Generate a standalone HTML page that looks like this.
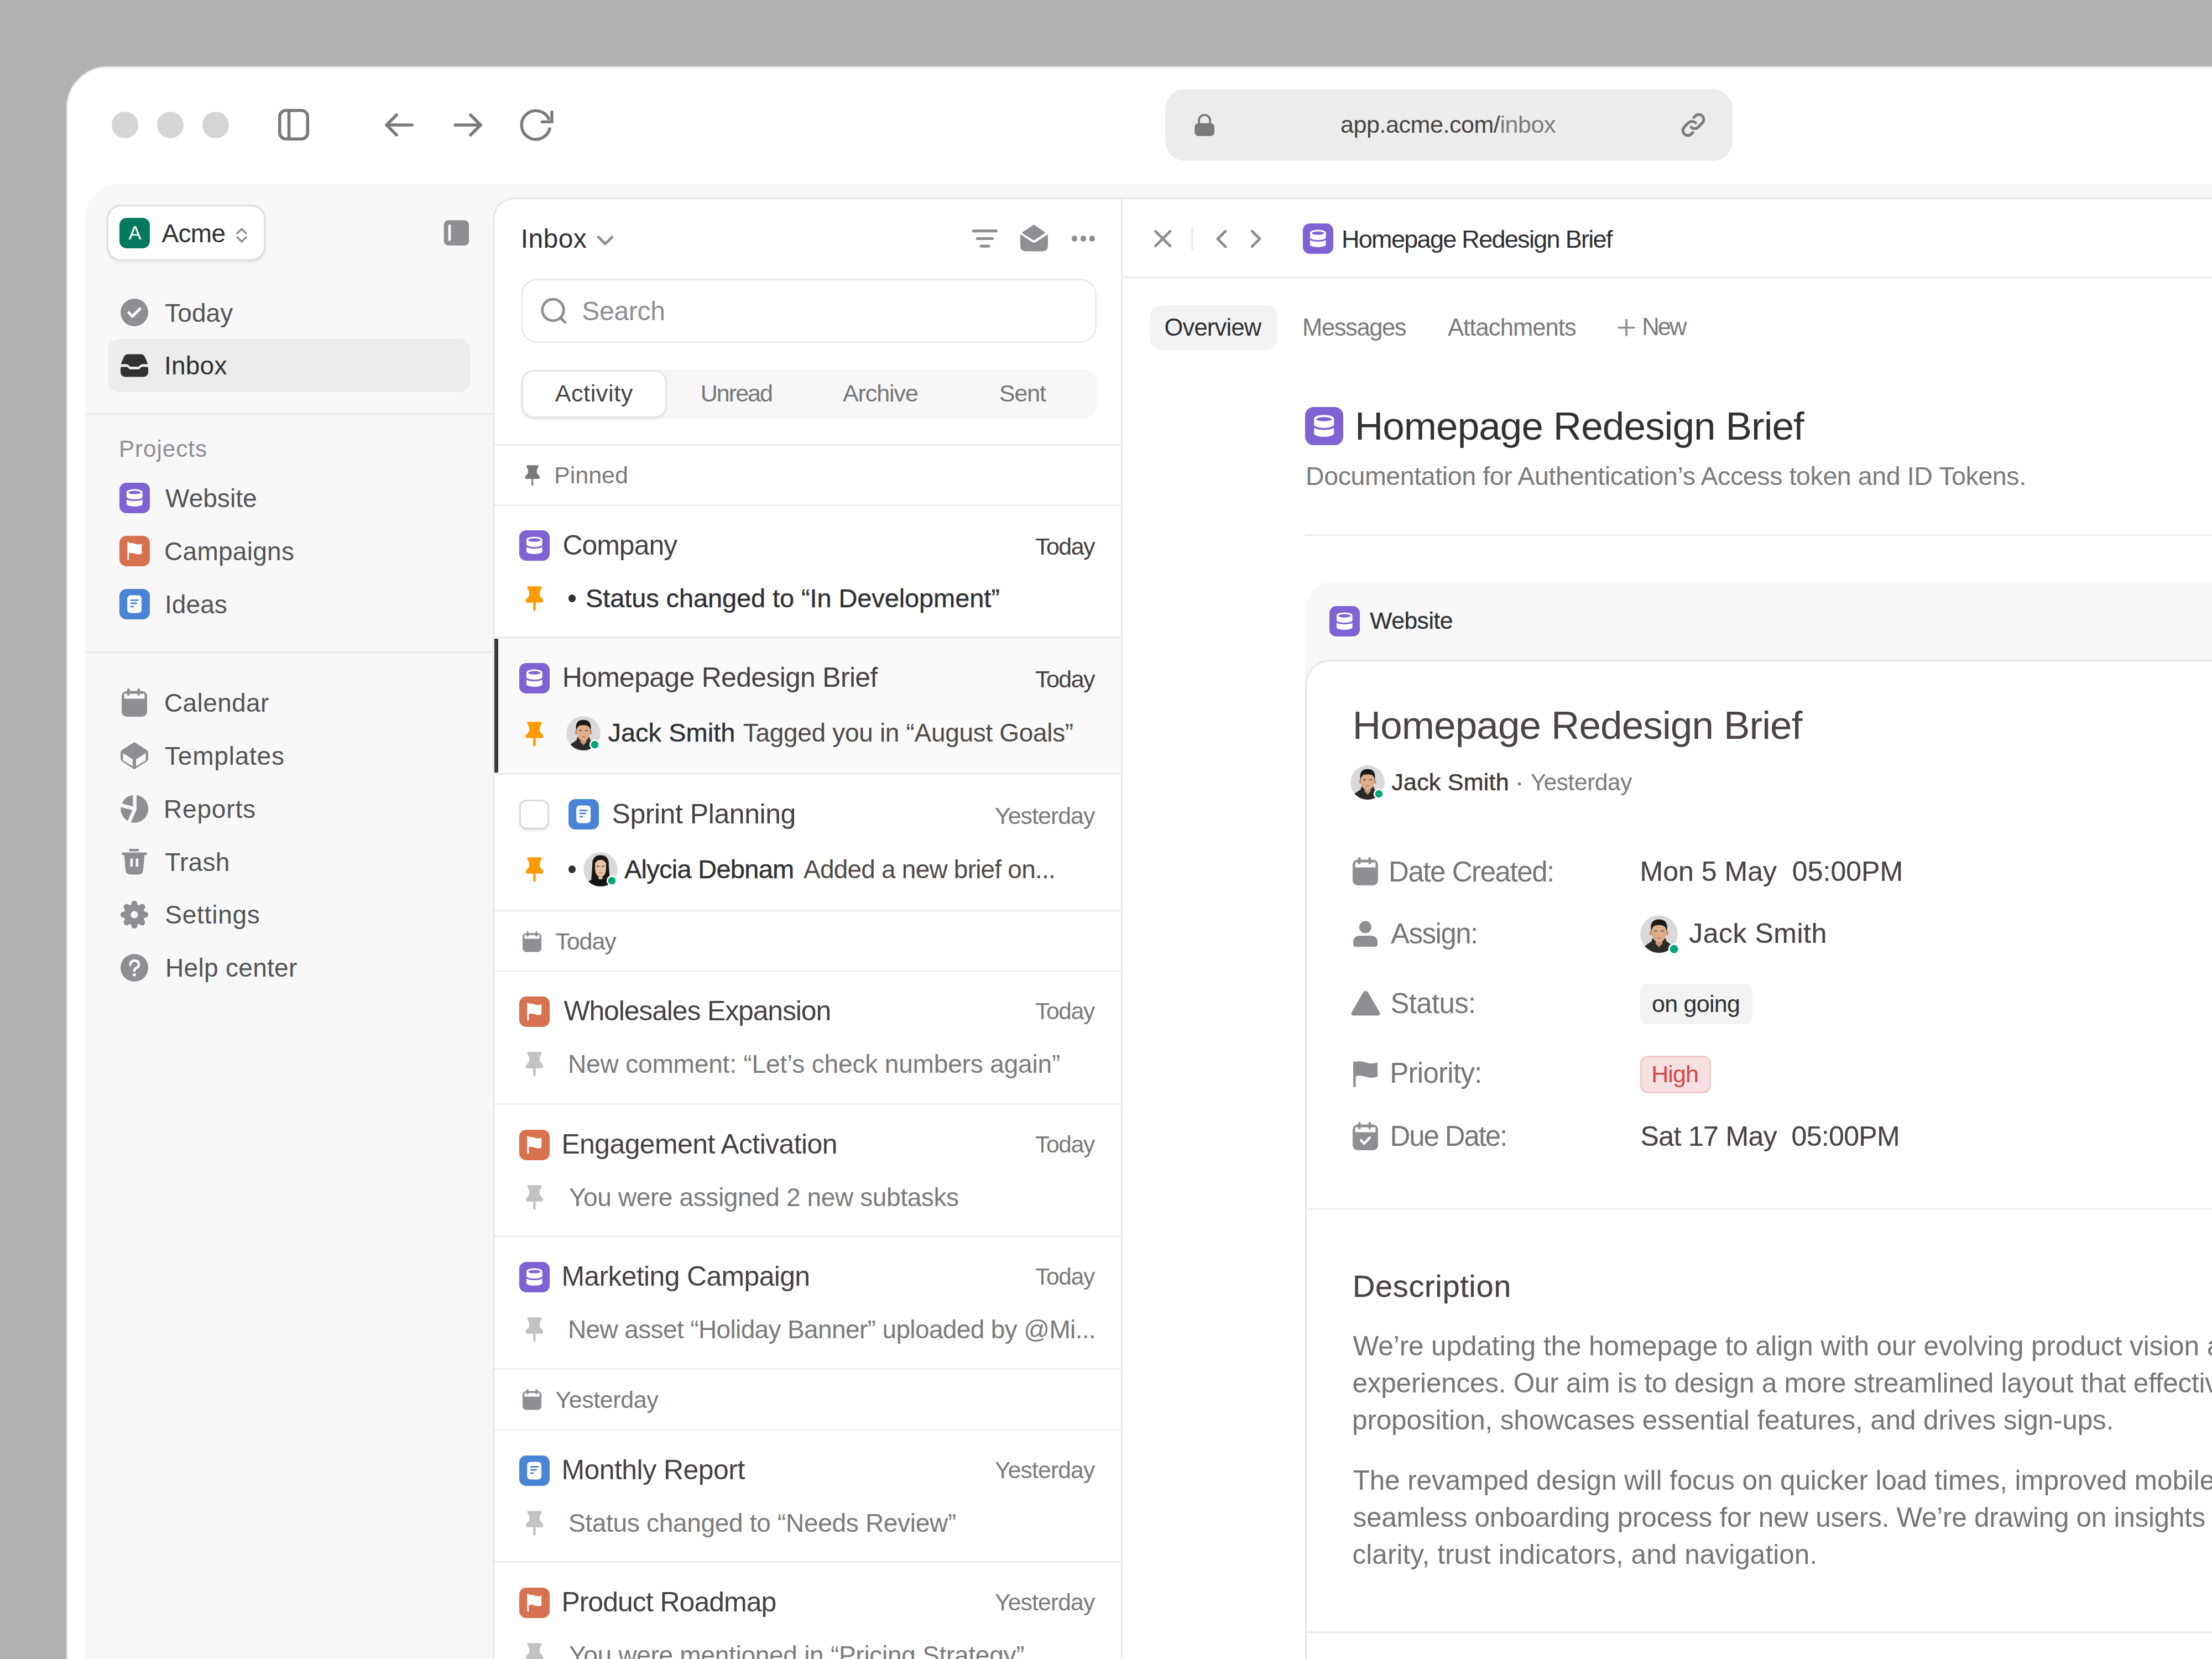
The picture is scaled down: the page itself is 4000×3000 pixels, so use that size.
<!DOCTYPE html>
<html><head><meta charset="utf-8"><title>Inbox</title><style>
html,body{margin:0;padding:0}
body{width:4000px;height:3000px;overflow:hidden;position:relative;background:#b1b1b1;font-family:"Liberation Sans",sans-serif}
.a{position:absolute;display:block}
.t{position:absolute;white-space:pre;line-height:1;font-family:"Liberation Sans",sans-serif}
</style></head><body>
<div class="a" style="left:120px;top:120px;width:4000px;height:3000px;background:#fff;border:3px solid #ececec;border-top-left-radius:75px;box-sizing:border-box"></div>
<div class="a" style="left:202px;top:202px;width:48px;height:48px;background:#d5d5d5;border-radius:50%"></div>
<div class="a" style="left:284px;top:202px;width:48px;height:48px;background:#d5d5d5;border-radius:50%"></div>
<div class="a" style="left:366px;top:202px;width:48px;height:48px;background:#d5d5d5;border-radius:50%"></div>
<svg class="a" style="left:500px;top:194px;" width="62" height="63" viewBox="0 0 62 63"><rect x="5.8" y="5.8" width="50.5" height="51.5" rx="11" fill="none" stroke="#7a7a7a" stroke-width="5.6"/><line x1="22.5" y1="6" x2="22.5" y2="57" stroke="#7a7a7a" stroke-width="5.6"/></svg>
<svg class="a" style="left:690px;top:200px;" width="64" height="52" viewBox="0 0 64 52"><path d="M55 26H9M27 8L9 26L27 44" fill="none" stroke="#7a7a7a" stroke-width="5.6" stroke-linecap="round" stroke-linejoin="round"/></svg>
<svg class="a" style="left:814px;top:200px;" width="64" height="52" viewBox="0 0 64 52"><path d="M9 26H55M37 8L55 26L37 44" fill="none" stroke="#7a7a7a" stroke-width="5.6" stroke-linecap="round" stroke-linejoin="round"/></svg>
<svg class="a" style="left:936px;top:192px;" width="70" height="70" viewBox="0 0 70 70"><path d="M58.1 40.8A25.9 25.9 0 1 1 56.3 22.6" fill="none" stroke="#7a7a7a" stroke-width="5.4" stroke-linecap="round"/><path d="M62 10.4V28.4H44.4" fill="none" stroke="#7a7a7a" stroke-width="5.4" stroke-linecap="round" stroke-linejoin="round"/></svg>
<div class="a" style="left:2107px;top:161px;width:1026px;height:130px;background:#ececec;border-radius:36px"></div>
<svg class="a" style="left:2158px;top:205px;" width="40" height="43" viewBox="0 0 40 43"><path d="M10.1 20V12.85A10 10 0 0 1 30.1 12.85V20" fill="none" stroke="#7a7a7a" stroke-width="3.8"/><rect x="2.3" y="17.7" width="35.7" height="23.2" rx="6.8" fill="#7a7a7a"/></svg>
<svg class="a" style="left:3036px;top:200px;" width="52" height="52" viewBox="0 0 52 52"><g fill="none" stroke="#7a7a7a" stroke-width="5" stroke-linecap="round"><path d="M22 30a9 9 0 0 0 12.7 0l8-8a9 9 0 0 0-12.7-12.7l-3 3"/><path d="M30 22a9 9 0 0 0-12.7 0l-8 8a9 9 0 0 0 12.7 12.7l3-3"/></g></svg>
<div class="t" style="left:2424.0px;top:204.0px;font-size:43px;color:#48433f;letter-spacing:-0.43px;">app.acme.com/<span style="color:#7c7c7c">inbox</span></div>
<div class="a" style="left:154px;top:332px;width:3900px;height:2700px;background:#f8f8f8;border-top-left-radius:62px"></div>
<div class="a" style="left:193px;top:370px;width:287px;height:102px;background:#fff;border:3px solid #dedede;border-radius:26px;box-sizing:border-box;box-shadow:0 3px 5px rgba(0,0,0,.07)"></div>
<div class="a" style="left:216px;top:394px;width:55px;height:55px;background:#037a5d;border-radius:13px"></div>
<div class="t" style="left:232.4px;top:404.3px;font-size:34.5px;color:#ffffff;">A</div>
<div class="t" style="left:292.5px;top:398.5px;font-size:46px;color:#2f3133;letter-spacing:-0.67px;">Acme</div>
<svg class="a" style="left:424px;top:408px;" width="26" height="34" viewBox="0 0 26 34"><path d="M5 14L13 6L21 14M5 21L13 29L21 21" fill="none" stroke="#8e8f93" stroke-width="3.4" stroke-linecap="round" stroke-linejoin="round"/></svg>
<svg class="a" style="left:802px;top:398px;" width="48" height="48" viewBox="0 0 48 48"><rect x="0.7" y="0.3" width="45.3" height="45.6" rx="8" fill="#8e8f93"/><rect x="8.5" y="7.7" width="4.8" height="30.3" rx="2.4" fill="#f9f9f9"/></svg>
<svg class="a" style="left:218px;top:540px;" width="50" height="50" viewBox="0 0 50 50"><circle cx="25" cy="25" r="25" fill="#8e8f93"/><path d="M15 25.5l6.5 6.5L35 18.5" fill="none" stroke="#fff" stroke-width="5" stroke-linecap="round" stroke-linejoin="round"/></svg>
<div class="t" style="left:298.2px;top:543.1px;font-size:46px;color:#535456;letter-spacing:0.06px;">Today</div>
<div class="a" style="left:195px;top:613px;width:655px;height:96px;background:#ececec;border-radius:20px"></div>
<svg class="a" style="left:218px;top:640px;" width="50" height="42" viewBox="0 0 50 42"><path d="M14 0.4H36Q41.5 0.4 44 5.5L49 17Q49.5 18.4 48 18.4H40Q37 18.4 35 20.8L33.5 22.3Q32.8 23 31.5 23H18.5Q17.2 23 16.5 22.3L15 20.8Q13 18.4 10 18.4H2Q0.5 18.4 1 17L6 5.5Q8.5 0.4 14 0.4Z" fill="#2f3133"/><path d="M2 23.4H11Q12.5 23.4 13.5 24.8L15 26.5Q16.3 28 18.5 28H31.5Q33.7 28 35 26.5L36.5 24.8Q37.5 23.4 39 23.4H48Q50 23.4 50 25.5V32Q50 41.5 40.5 41.5H9.5Q0 41.5 0 32V25.5Q0 23.4 2 23.4Z" fill="#2f3133"/></svg>
<div class="t" style="left:296.9px;top:638.4px;font-size:46px;color:#2f3133;letter-spacing:0.24px;">Inbox</div>
<div class="a" style="left:154px;top:747px;width:737px;height:3px;background:#e9e9e9"></div>
<div class="t" style="left:215.0px;top:790.9px;font-size:42px;color:#8e8e93;letter-spacing:1.04px;">Projects</div>
<svg class="a" style="left:216px;top:873px;" width="55" height="55" viewBox="0 0 55 55"><g transform="scale(1.0000)"><rect width="55" height="55" rx="12.5" fill="#7f63d5"/><path d="M13 17A14.3 5.6 0 0 1 41.6 17V25.4A14.3 4.6 0 0 1 13 25.4Z" fill="#fff"/><ellipse cx="27.3" cy="17.6" rx="11.2" ry="3" fill="#7f63d5"/><path d="M13 29.2A14.3 3.8 0 0 0 41.6 29.2V38.2A14.3 4.8 0 0 1 13 38.2Z" fill="#fff"/></g></svg>
<div class="t" style="left:299.0px;top:878.1px;font-size:46px;color:#535456;letter-spacing:0.04px;">Website</div>
<svg class="a" style="left:216px;top:969px;" width="55" height="55" viewBox="0 0 55 55"><g transform="scale(1.0000)"><rect width="55" height="55" rx="12.5" fill="#d8714f"/><rect x="14.3" y="11" width="2.9" height="32.6" rx="1.4" fill="#fff"/><path d="M17 13.5Q21 11.5 28 14.2Q34 16.8 40.2 14.2V32.2Q34 34.8 28 32.2Q21 29.5 17 31.8Z" fill="#fff"/></g></svg>
<div class="t" style="left:297.0px;top:974.1px;font-size:46px;color:#535456;letter-spacing:0.29px;">Campaigns</div>
<svg class="a" style="left:216px;top:1065px;" width="55" height="55" viewBox="0 0 55 55"><g transform="scale(1.0000)"><rect width="55" height="55" rx="12.5" fill="#4a84d6"/><rect x="14.2" y="11.6" width="25.8" height="31.8" rx="6" fill="#fff"/><g stroke="#4a84d6" stroke-width="2.8" stroke-linecap="round"><path d="M21 20.4H33.6"/><path d="M21 26H30.8"/><path d="M21 31.8H25"/></g></g></svg>
<div class="t" style="left:298.0px;top:1070.1px;font-size:46px;color:#535456;letter-spacing:0.07px;">Ideas</div>
<div class="a" style="left:154px;top:1178px;width:737px;height:3px;background:#e9e9e9"></div>
<svg class="a" style="left:220px;top:1245px;" width="47" height="52" viewBox="0 0 47 52"><g fill="#8e8f93"><rect x="0" y="4.5" width="46" height="46.5" rx="9"/><rect x="10" y="0" width="4.6" height="13" rx="2.3"/><rect x="28.5" y="0" width="4.6" height="13" rx="2.3"/></g><rect x="4.6" y="9.5" width="36.8" height="9" fill="#f8f8f8"/><rect x="10" y="0" width="4.6" height="13" rx="2.3" fill="#8e8f93"/><rect x="28.5" y="0" width="4.6" height="13" rx="2.3" fill="#8e8f93"/></svg>
<div class="t" style="left:297.0px;top:1248.1px;font-size:46px;color:#535456;letter-spacing:0.38px;">Calendar</div>
<svg class="a" style="left:218px;top:1341px;" width="50" height="51" viewBox="0 0 50 51"><path d="M25 1L47 15Q50 17 50 21V30Q50 34 47 36L27 49Q25 50.5 23 49L3 36Q0 34 0 30V21Q0 17 3 15Z" fill="#8e8f93"/><path d="M4.5 21L22 32V45L4.5 34Z M45.5 21L28 32V45L45.5 34Z" fill="#f8f8f8"/></svg>
<div class="t" style="left:298.0px;top:1344.1px;font-size:46px;color:#535456;letter-spacing:0.79px;">Templates</div>
<svg class="a" style="left:218px;top:1437px;" width="52" height="52" viewBox="0 0 52 52"><g fill="#8e8f93"><path d="M28.9 0.76A25.2 25.2 0 1 1 18.9 50.1L28.9 27Z"/><path d="M22.5 0.66V21.6L2.5 15.8A25.2 25.2 0 0 1 22.5 0.66Z"/><path d="M0.6 22.4L21.3 28L12.8 47.5A25.2 25.2 0 0 1 0.6 22.4Z"/></g></svg>
<div class="t" style="left:296.0px;top:1439.6px;font-size:46px;color:#535456;letter-spacing:0.82px;">Reports</div>
<svg class="a" style="left:220px;top:1535px;" width="46" height="47" viewBox="0 0 46 47"><g fill="#8e8f93"><rect x="13.5" y="0" width="18" height="4.4" rx="2.2"/><rect x="0" y="6.5" width="46" height="4.8" rx="2.4"/><path d="M4.5 10H41.5L39 38Q38.5 46.5 30 46.5H16Q7.5 46.5 7 38Z"/></g><rect x="15.5" y="17" width="4.6" height="15.5" rx="2.3" fill="#f8f8f8"/><rect x="25.5" y="17" width="4.6" height="15.5" rx="2.3" fill="#f8f8f8"/></svg>
<div class="t" style="left:298.2px;top:1535.6px;font-size:46px;color:#535456;letter-spacing:0.30px;">Trash</div>
<svg class="a" style="left:218px;top:1629px;" width="50" height="51" viewBox="0 0 50 51"><g fill="#8e8f93"><circle cx="25" cy="25" r="19"/><circle cx="25.00" cy="5.50" r="5.6"/><circle cx="38.79" cy="11.21" r="5.6"/><circle cx="44.50" cy="25.00" r="5.6"/><circle cx="38.79" cy="38.79" r="5.6"/><circle cx="25.00" cy="44.50" r="5.6"/><circle cx="11.21" cy="38.79" r="5.6"/><circle cx="5.50" cy="25.00" r="5.6"/><circle cx="11.21" cy="11.21" r="5.6"/></g><circle cx="25" cy="25" r="6.6" fill="#f8f8f8"/></svg>
<div class="t" style="left:298.3px;top:1631.1px;font-size:46px;color:#535456;letter-spacing:0.76px;">Settings</div>
<svg class="a" style="left:218px;top:1725px;" width="50" height="50" viewBox="0 0 50 50"><circle cx="25" cy="25" r="25" fill="#8e8f93"/><path d="M17.5 19.5Q18.5 12 25.5 12Q33 12.5 33 19Q33 23.5 28.5 25.5Q25 27 25 30.5" fill="none" stroke="#fff" stroke-width="4.4" stroke-linecap="round"/><circle cx="25" cy="37.8" r="2.8" fill="#fff"/></svg>
<div class="t" style="left:299.0px;top:1727.1px;font-size:46px;color:#535456;letter-spacing:0.31px;">Help center</div>
<div class="a" style="left:891px;top:357px;width:3200px;height:2700px;background:#fff;border-left:3px solid #e8e8e8;border-top:3px solid #e8e8e8;border-top-left-radius:40px;box-sizing:border-box"></div>
<div class="a" style="left:2027px;top:357px;width:3px;height:2650px;background:#e8e8e8"></div>
<div class="t" style="left:941.8px;top:408.2px;font-size:48px;color:#2f3133;letter-spacing:0.39px;">Inbox</div>
<svg class="a" style="left:1076px;top:422px;" width="38" height="26" viewBox="0 0 38 26"><path d="M6 6.5L18.5 19L31 6.5" fill="none" stroke="#8e8f93" stroke-width="4.8" stroke-linecap="round" stroke-linejoin="round"/></svg>
<svg class="a" style="left:1754px;top:412px;" width="54" height="38" viewBox="0 0 54 38"><g stroke="#8e8f93" stroke-width="5.2" stroke-linecap="round"><path d="M6.5 5.7H47.5"/><path d="M13.3 19.5H40.7"/><path d="M20.2 33.1H33.8"/></g></svg>
<svg class="a" style="left:1844px;top:405px;" width="52" height="50" viewBox="0 0 52 50"><path d="M25.9 1.2Q26 1 27.2 1.8L46 14.5Q47.5 15.5 46 16.5L27 29Q26 29.6 25 29L5.6 16.5Q4 15.5 5.6 14.5L24.7 1.8Q25.4 1.3 25.9 1.2Z" fill="#8e8f93" transform="translate(-.6 .3)"/><path d="M1 20Q1 18.5 2.5 19.5L22 32.5Q26 35.2 30 32.5L49.5 19.5Q51 18.5 51 20V39Q51 49.4 40.6 49.4H11.4Q1 49.4 1 39Z" fill="#8e8f93"/></svg>
<div class="a" style="left:1937.7px;top:426.3px;width:10.4px;height:10.4px;background:#8e8f93;border-radius:50%"></div>
<div class="a" style="left:1953.8px;top:426.3px;width:10.4px;height:10.4px;background:#8e8f93;border-radius:50%"></div>
<div class="a" style="left:1969.7px;top:426.3px;width:10.4px;height:10.4px;background:#8e8f93;border-radius:50%"></div>
<div class="a" style="left:942px;top:504px;width:1041px;height:116px;border:3px solid #eaeaea;border-radius:29px;box-sizing:border-box;background:#fff"></div>
<svg class="a" style="left:970px;top:532px;" width="60" height="60" viewBox="0 0 60 60"><circle cx="30" cy="28.5" r="19.3" fill="none" stroke="#8e8f93" stroke-width="4.8"/><path d="M44 43L51.5 50.5" stroke="#8e8f93" stroke-width="4.8" stroke-linecap="round"/></svg>
<div class="t" style="left:1052.3px;top:538.9px;font-size:48px;color:#8e8e93;letter-spacing:-0.28px;">Search</div>
<div class="a" style="left:942px;top:668px;width:1042px;height:89px;background:#f7f7f7;border-radius:25px"></div>
<div class="a" style="left:943px;top:669px;width:263px;height:87px;background:#fff;border:3px solid #e4e4e4;border-radius:22px;box-sizing:border-box;box-shadow:0 3px 4px rgba(0,0,0,.07)"></div>
<div class="t" style="left:1003.7px;top:690.3px;font-size:43px;color:#47423f;letter-spacing:0.62px;">Activity</div>
<div class="t" style="left:1266.8px;top:690.3px;font-size:43px;color:#767779;letter-spacing:-1.98px;">Unread</div>
<div class="t" style="left:1524.0px;top:690.3px;font-size:43px;color:#767779;letter-spacing:-1.08px;">Archive</div>
<div class="t" style="left:1807.0px;top:690.3px;font-size:43px;color:#767779;letter-spacing:-1.17px;">Sent</div>
<div class="a" style="left:894px;top:1153px;width:1133px;height:245px;background:#fafafa"></div>
<div class="a" style="left:894px;top:1154.5px;width:7px;height:242px;background:#3d3a39"></div>
<div class="a" style="left:894px;top:803px;width:1133px;height:3px;background:#ededed"></div>
<div class="a" style="left:894px;top:912px;width:1133px;height:3px;background:#ededed"></div>
<div class="a" style="left:894px;top:1151px;width:1133px;height:3px;background:#ededed"></div>
<div class="a" style="left:894px;top:1398px;width:1133px;height:3px;background:#ededed"></div>
<div class="a" style="left:894px;top:1645px;width:1133px;height:3px;background:#ededed"></div>
<div class="a" style="left:894px;top:1754px;width:1133px;height:3px;background:#ededed"></div>
<div class="a" style="left:894px;top:1995px;width:1133px;height:3px;background:#ededed"></div>
<div class="a" style="left:894px;top:2234px;width:1133px;height:3px;background:#ededed"></div>
<div class="a" style="left:894px;top:2474px;width:1133px;height:3px;background:#ededed"></div>
<div class="a" style="left:894px;top:2584px;width:1133px;height:3px;background:#ededed"></div>
<div class="a" style="left:894px;top:2823px;width:1133px;height:3px;background:#ededed"></div>
<svg class="a" style="left:948.5px;top:841px;" width="29" height="39" viewBox="0 0 29 39"><g transform="scale(0.84)"><path d="M5 0.3H27.5Q30.4 0.6 29.2 3.6L25.9 10.5V17.2L31.4 23.6Q33.6 26.6 30.6 29.8H2.4Q-0.6 26.6 1.6 23.6L7.1 17.2V10.5L3.8 3.6Q2.6 0.6 5 0.3Z" fill="#7a7a7a"/><rect x="14.649999999999999" y="28" width="3.5" height="16.5" rx="1.75" fill="#7a7a7a"/></g></svg>
<div class="t" style="left:1002.0px;top:837.6px;font-size:43px;color:#7b7b7b;">Pinned</div>
<svg class="a" style="left:938.5px;top:959px;" width="55" height="55" viewBox="0 0 55 55"><g transform="scale(1.0000)"><rect width="55" height="55" rx="12.5" fill="#7f63d5"/><path d="M13 17A14.3 5.6 0 0 1 41.6 17V25.4A14.3 4.6 0 0 1 13 25.4Z" fill="#fff"/><ellipse cx="27.3" cy="17.6" rx="11.2" ry="3" fill="#7f63d5"/><path d="M13 29.2A14.3 3.8 0 0 0 41.6 29.2V38.2A14.3 4.8 0 0 1 13 38.2Z" fill="#fff"/></g></svg>
<div class="t" style="left:1017.4px;top:960.9px;font-size:50px;color:#47423f;letter-spacing:-1.03px;">Company</div>
<div class="t" style="left:1872.0px;top:966.6px;font-size:43px;color:#47423f;letter-spacing:-1.56px;">Today</div>
<svg class="a" style="left:950px;top:1060px;" width="34" height="46" viewBox="0 0 34 46"><g transform="scale(1.0)"><path d="M5 0.3H27.5Q30.4 0.6 29.2 3.6L25.9 10.5V17.2L31.4 23.6Q33.6 26.6 30.6 29.8H2.4Q-0.6 26.6 1.6 23.6L7.1 17.2V10.5L3.8 3.6Q2.6 0.6 5 0.3Z" fill="#ff9a00"/><rect x="14.2" y="28" width="4.4" height="16.5" rx="2.2" fill="#ff9a00"/></g></svg>
<div class="a" style="left:1027.5px;top:1075.1px;width:13.8px;height:13.8px;background:#2f3133;border-radius:50%"></div>
<div class="t" style="left:1059.0px;top:1058.0px;font-size:47px;color:#2f3133;letter-spacing:-0.11px;-webkit-text-stroke:0.4px #2f3133;">Status changed to “In Development”</div>
<svg class="a" style="left:938.5px;top:1199px;" width="55" height="55" viewBox="0 0 55 55"><g transform="scale(1.0000)"><rect width="55" height="55" rx="12.5" fill="#7f63d5"/><path d="M13 17A14.3 5.6 0 0 1 41.6 17V25.4A14.3 4.6 0 0 1 13 25.4Z" fill="#fff"/><ellipse cx="27.3" cy="17.6" rx="11.2" ry="3" fill="#7f63d5"/><path d="M13 29.2A14.3 3.8 0 0 0 41.6 29.2V38.2A14.3 4.8 0 0 1 13 38.2Z" fill="#fff"/></g></svg>
<div class="t" style="left:1016.7px;top:1200.4px;font-size:50px;color:#47423f;letter-spacing:-0.72px;">Homepage Redesign Brief</div>
<div class="t" style="left:1872.0px;top:1206.6px;font-size:43px;color:#47423f;letter-spacing:-1.56px;">Today</div>
<svg class="a" style="left:950px;top:1305px;" width="34" height="46" viewBox="0 0 34 46"><g transform="scale(1.0)"><path d="M5 0.3H27.5Q30.4 0.6 29.2 3.6L25.9 10.5V17.2L31.4 23.6Q33.6 26.6 30.6 29.8H2.4Q-0.6 26.6 1.6 23.6L7.1 17.2V10.5L3.8 3.6Q2.6 0.6 5 0.3Z" fill="#ff9a00"/><rect x="14.2" y="28" width="4.4" height="16.5" rx="2.2" fill="#ff9a00"/></g></svg>
<svg class="a" style="left:1024px;top:1295px;overflow:visible" width="66" height="66" viewBox="0 0 66 66"><defs><clipPath id="av1"><circle cx="50" cy="50" r="50"/></clipPath></defs><g transform="scale(0.6200)"><g clip-path="url(#av1)"><circle cx="50" cy="50" r="50" fill="#d9d9d9"/><path d="M6 100L10 84Q22 75 30 70Q31 59 40 58L50 86L60 58Q69 59 70 70Q78 75 90 84L94 100Z" fill="#2c2b27"/><path d="M41 62H59V76L50 85L41 76Z" fill="#c99575"/><ellipse cx="29" cy="47" rx="3.8" ry="6.5" fill="#c98f6a"/><ellipse cx="71" cy="47" rx="3.8" ry="6.5" fill="#c98f6a"/><path d="M32 32Q40 25 50 26Q60 25 68 32L68.5 50Q67 70 50 72Q33 70 31.5 50Z" fill="#deae8a"/><path d="M28.5 38Q26 11 50 11Q74 11 71.5 38L70 42Q69 31 61 27.5Q50 25 39 27.5Q31 31 30 42Z" fill="#1b1a18"/><path d="M37 42H45M55 42H63" stroke="#4a3428" stroke-width="2.2"/><path d="M45 60.5H55" stroke="#b57a66" stroke-width="2.2"/></g><circle cx="83" cy="83" r="15.5" fill="#fafafa"/><circle cx="83" cy="83" r="10.9" fill="#00a57a"/></g></svg>
<div class="t" style="left:1099.4px;top:1301.0px;font-size:47px;color:#2f3133;letter-spacing:0.03px;-webkit-text-stroke:0.4px #2f3133;">Jack Smith</div>
<div class="t" style="left:1343.8px;top:1301.9px;font-size:46px;color:#4f4a47;letter-spacing:-0.32px;">Tagged you in “August Goals”</div>
<div class="a" style="left:939px;top:1446px;width:54px;height:54px;background:#fff;border:3px solid #d9d9d9;border-radius:14px;box-sizing:border-box;box-shadow:0 3px 5px rgba(0,0,0,.08)"></div>
<svg class="a" style="left:1027.5px;top:1445px;" width="55" height="55" viewBox="0 0 55 55"><g transform="scale(1.0000)"><rect width="55" height="55" rx="12.5" fill="#4a84d6"/><rect x="14.2" y="11.6" width="25.8" height="31.8" rx="6" fill="#fff"/><g stroke="#4a84d6" stroke-width="2.8" stroke-linecap="round"><path d="M21 20.4H33.6"/><path d="M21 26H30.8"/><path d="M21 31.8H25"/></g></g></svg>
<div class="t" style="left:1106.5px;top:1447.2px;font-size:50px;color:#47423f;letter-spacing:-0.45px;">Sprint Planning</div>
<div class="t" style="left:1799.0px;top:1453.6px;font-size:43px;color:#7b7b7b;letter-spacing:-1.02px;">Yesterday</div>
<svg class="a" style="left:950px;top:1550px;" width="34" height="46" viewBox="0 0 34 46"><g transform="scale(1.0)"><path d="M5 0.3H27.5Q30.4 0.6 29.2 3.6L25.9 10.5V17.2L31.4 23.6Q33.6 26.6 30.6 29.8H2.4Q-0.6 26.6 1.6 23.6L7.1 17.2V10.5L3.8 3.6Q2.6 0.6 5 0.3Z" fill="#ff9a00"/><rect x="14.2" y="28" width="4.4" height="16.5" rx="2.2" fill="#ff9a00"/></g></svg>
<div class="a" style="left:1027.7px;top:1565.2px;width:13.4px;height:13.4px;background:#2f3133;border-radius:50%"></div>
<svg class="a" style="left:1055px;top:1541px;overflow:visible" width="66" height="66" viewBox="0 0 66 66"><defs><clipPath id="av2"><circle cx="50" cy="50" r="50"/></clipPath></defs><g transform="scale(0.6200)"><g clip-path="url(#av2)"><circle cx="50" cy="50" r="50" fill="#d9d9d9"/><path d="M26 40Q24 9 50 9Q76 9 74 40L78 92H22Z" fill="#1a1816"/><path d="M34 32Q40 22 50 22Q60 22 66 32L66 50Q65 70 50 73Q35 70 34 50Z" fill="#e8c0a2"/><path d="M44 66H56V80H44Z" fill="#e2b696"/><path d="M6 100L12 86Q28 78 44 78Q50 82 56 78Q72 78 88 86L94 100Z" fill="#161514"/><path d="M39 41H46M54 41H61" stroke="#3a2a20" stroke-width="2"/><path d="M45 60H55" stroke="#c08070" stroke-width="2.4"/></g><circle cx="83" cy="83" r="15.5" fill="#fff"/><circle cx="83" cy="83" r="10.9" fill="#00a57a"/></g></svg>
<div class="t" style="left:1129.0px;top:1548.2px;font-size:47px;color:#2f3133;letter-spacing:-0.74px;-webkit-text-stroke:0.4px #2f3133;">Alycia Debnam</div>
<div class="t" style="left:1453.0px;top:1549.1px;font-size:46px;color:#4f4a47;letter-spacing:-0.79px;">Added a new brief on...</div>
<svg class="a" style="left:945px;top:1684px;" width="35" height="38" viewBox="0 0 35 38"><g fill="#8e8f93"><rect x="0" y="3.5" width="34" height="34" rx="6.5"/></g><rect x="3.4" y="7" width="27.2" height="6.6" fill="#fff"/><g fill="#8e8f93"><rect x="7.3" y="0" width="3.4" height="9.6" rx="1.7"/><rect x="23.3" y="0" width="3.4" height="9.6" rx="1.7"/></g></svg>
<div class="t" style="left:1004.3px;top:1680.6px;font-size:43px;color:#7b7b7b;letter-spacing:-1.06px;">Today</div>
<svg class="a" style="left:938.5px;top:1802px;" width="55" height="55" viewBox="0 0 55 55"><g transform="scale(1.0000)"><rect width="55" height="55" rx="12.5" fill="#d8714f"/><rect x="14.3" y="11" width="2.9" height="32.6" rx="1.4" fill="#fff"/><path d="M17 13.5Q21 11.5 28 14.2Q34 16.8 40.2 14.2V32.2Q34 34.8 28 32.2Q21 29.5 17 31.8Z" fill="#fff"/></g></svg>
<div class="t" style="left:1019.4px;top:1803.2px;font-size:50px;color:#47423f;letter-spacing:-1.16px;">Wholesales Expansion</div>
<div class="t" style="left:1872.0px;top:1808.0px;font-size:42.5px;color:#7b7b7b;letter-spacing:-1.29px;">Today</div>
<svg class="a" style="left:950px;top:1902px;" width="34" height="46" viewBox="0 0 34 46"><g transform="scale(1.0)"><path d="M5 0.3H27.5Q30.4 0.6 29.2 3.6L25.9 10.5V17.2L31.4 23.6Q33.6 26.6 30.6 29.8H2.4Q-0.6 26.6 1.6 23.6L7.1 17.2V10.5L3.8 3.6Q2.6 0.6 5 0.3Z" fill="#c2c2c4"/><rect x="14.2" y="28" width="4.4" height="16.5" rx="2.2" fill="#c2c2c4"/></g></svg>
<div class="t" style="left:1027.0px;top:1901.1px;font-size:46px;color:#7b7b7b;letter-spacing:-0.16px;">New comment: “Let’s check numbers again”</div>
<svg class="a" style="left:938.5px;top:2043px;" width="55" height="55" viewBox="0 0 55 55"><g transform="scale(1.0000)"><rect width="55" height="55" rx="12.5" fill="#d8714f"/><rect x="14.3" y="11" width="2.9" height="32.6" rx="1.4" fill="#fff"/><path d="M17 13.5Q21 11.5 28 14.2Q34 16.8 40.2 14.2V32.2Q34 34.8 28 32.2Q21 29.5 17 31.8Z" fill="#fff"/></g></svg>
<div class="t" style="left:1015.4px;top:2044.2px;font-size:50px;color:#47423f;letter-spacing:-0.62px;">Engagement Activation</div>
<div class="t" style="left:1872.0px;top:2049.0px;font-size:42.5px;color:#7b7b7b;letter-spacing:-1.29px;">Today</div>
<svg class="a" style="left:950px;top:2143px;" width="34" height="46" viewBox="0 0 34 46"><g transform="scale(1.0)"><path d="M5 0.3H27.5Q30.4 0.6 29.2 3.6L25.9 10.5V17.2L31.4 23.6Q33.6 26.6 30.6 29.8H2.4Q-0.6 26.6 1.6 23.6L7.1 17.2V10.5L3.8 3.6Q2.6 0.6 5 0.3Z" fill="#c2c2c4"/><rect x="14.2" y="28" width="4.4" height="16.5" rx="2.2" fill="#c2c2c4"/></g></svg>
<div class="t" style="left:1029.0px;top:2142.1px;font-size:46px;color:#7b7b7b;letter-spacing:-0.38px;">You were assigned 2 new subtasks</div>
<svg class="a" style="left:938.5px;top:2282px;" width="55" height="55" viewBox="0 0 55 55"><g transform="scale(1.0000)"><rect width="55" height="55" rx="12.5" fill="#7f63d5"/><path d="M13 17A14.3 5.6 0 0 1 41.6 17V25.4A14.3 4.6 0 0 1 13 25.4Z" fill="#fff"/><ellipse cx="27.3" cy="17.6" rx="11.2" ry="3" fill="#7f63d5"/><path d="M13 29.2A14.3 3.8 0 0 0 41.6 29.2V38.2A14.3 4.8 0 0 1 13 38.2Z" fill="#fff"/></g></svg>
<div class="t" style="left:1015.4px;top:2283.2px;font-size:50px;color:#47423f;letter-spacing:-0.68px;">Marketing Campaign</div>
<div class="t" style="left:1872.0px;top:2288.0px;font-size:42.5px;color:#7b7b7b;letter-spacing:-1.29px;">Today</div>
<svg class="a" style="left:950px;top:2382px;" width="34" height="46" viewBox="0 0 34 46"><g transform="scale(1.0)"><path d="M5 0.3H27.5Q30.4 0.6 29.2 3.6L25.9 10.5V17.2L31.4 23.6Q33.6 26.6 30.6 29.8H2.4Q-0.6 26.6 1.6 23.6L7.1 17.2V10.5L3.8 3.6Q2.6 0.6 5 0.3Z" fill="#c2c2c4"/><rect x="14.2" y="28" width="4.4" height="16.5" rx="2.2" fill="#c2c2c4"/></g></svg>
<div class="t" style="left:1027.0px;top:2381.1px;font-size:46px;color:#7b7b7b;letter-spacing:-0.63px;">New asset “Holiday Banner” uploaded by @Mi...</div>
<svg class="a" style="left:945px;top:2512px;" width="35" height="38" viewBox="0 0 35 38"><g fill="#8e8f93"><rect x="0" y="3.5" width="34" height="34" rx="6.5"/></g><rect x="3.4" y="7" width="27.2" height="6.6" fill="#fff"/><g fill="#8e8f93"><rect x="7.3" y="0" width="3.4" height="9.6" rx="1.7"/><rect x="23.3" y="0" width="3.4" height="9.6" rx="1.7"/></g></svg>
<div class="t" style="left:1004.3px;top:2510.1px;font-size:43px;color:#7b7b7b;letter-spacing:-0.39px;">Yesterday</div>
<svg class="a" style="left:938.5px;top:2632px;" width="55" height="55" viewBox="0 0 55 55"><g transform="scale(1.0000)"><rect width="55" height="55" rx="12.5" fill="#4a84d6"/><rect x="14.2" y="11.6" width="25.8" height="31.8" rx="6" fill="#fff"/><g stroke="#4a84d6" stroke-width="2.8" stroke-linecap="round"><path d="M21 20.4H33.6"/><path d="M21 26H30.8"/><path d="M21 31.8H25"/></g></g></svg>
<div class="t" style="left:1015.4px;top:2633.2px;font-size:50px;color:#47423f;letter-spacing:-0.55px;">Monthly Report</div>
<div class="t" style="left:1799.0px;top:2638.0px;font-size:42.5px;color:#7b7b7b;letter-spacing:-0.78px;">Yesterday</div>
<svg class="a" style="left:950px;top:2732px;" width="34" height="46" viewBox="0 0 34 46"><g transform="scale(1.0)"><path d="M5 0.3H27.5Q30.4 0.6 29.2 3.6L25.9 10.5V17.2L31.4 23.6Q33.6 26.6 30.6 29.8H2.4Q-0.6 26.6 1.6 23.6L7.1 17.2V10.5L3.8 3.6Q2.6 0.6 5 0.3Z" fill="#c2c2c4"/><rect x="14.2" y="28" width="4.4" height="16.5" rx="2.2" fill="#c2c2c4"/></g></svg>
<div class="t" style="left:1028.0px;top:2731.1px;font-size:46px;color:#7b7b7b;letter-spacing:-0.31px;">Status changed to “Needs Review”</div>
<svg class="a" style="left:938.5px;top:2871px;" width="55" height="55" viewBox="0 0 55 55"><g transform="scale(1.0000)"><rect width="55" height="55" rx="12.5" fill="#d8714f"/><rect x="14.3" y="11" width="2.9" height="32.6" rx="1.4" fill="#fff"/><path d="M17 13.5Q21 11.5 28 14.2Q34 16.8 40.2 14.2V32.2Q34 34.8 28 32.2Q21 29.5 17 31.8Z" fill="#fff"/></g></svg>
<div class="t" style="left:1015.4px;top:2872.2px;font-size:50px;color:#47423f;letter-spacing:-1.01px;">Product Roadmap</div>
<div class="t" style="left:1799.0px;top:2877.0px;font-size:42.5px;color:#7b7b7b;letter-spacing:-0.78px;">Yesterday</div>
<svg class="a" style="left:950px;top:2971px;" width="34" height="46" viewBox="0 0 34 46"><g transform="scale(1.0)"><path d="M5 0.3H27.5Q30.4 0.6 29.2 3.6L25.9 10.5V17.2L31.4 23.6Q33.6 26.6 30.6 29.8H2.4Q-0.6 26.6 1.6 23.6L7.1 17.2V10.5L3.8 3.6Q2.6 0.6 5 0.3Z" fill="#c2c2c4"/><rect x="14.2" y="28" width="4.4" height="16.5" rx="2.2" fill="#c2c2c4"/></g></svg>
<div class="t" style="left:1029.0px;top:2970.1px;font-size:46px;color:#7b7b7b;letter-spacing:-0.28px;">You were mentioned in “Pricing Strategy”</div>
<div class="a" style="left:2030px;top:500px;width:2000px;height:3px;background:#ebebeb"></div>
<svg class="a" style="left:2080px;top:410px;" width="46" height="46" viewBox="0 0 46 46"><path d="M9.5 8.3L36 34.8M36 8.3L9.5 34.8" stroke="#8e8f93" stroke-width="4.8" stroke-linecap="round"/></svg>
<div class="a" style="left:2154.3px;top:411px;width:3.6px;height:41px;background:#ececec"></div>
<svg class="a" style="left:2192px;top:412px;" width="34" height="40" viewBox="0 0 34 40"><path d="M24 6L10 20L24 34" fill="none" stroke="#8e8f93" stroke-width="4.8" stroke-linecap="round" stroke-linejoin="round"/></svg>
<svg class="a" style="left:2254px;top:412px;" width="34" height="40" viewBox="0 0 34 40"><path d="M10 6L24 20L10 34" fill="none" stroke="#8e8f93" stroke-width="4.8" stroke-linecap="round" stroke-linejoin="round"/></svg>
<svg class="a" style="left:2356px;top:404px;" width="55" height="55" viewBox="0 0 55 55"><g transform="scale(1.0000)"><rect width="55" height="55" rx="12.5" fill="#7f63d5"/><path d="M13 17A14.3 5.6 0 0 1 41.6 17V25.4A14.3 4.6 0 0 1 13 25.4Z" fill="#fff"/><ellipse cx="27.3" cy="17.6" rx="11.2" ry="3" fill="#7f63d5"/><path d="M13 29.2A14.3 3.8 0 0 0 41.6 29.2V38.2A14.3 4.8 0 0 1 13 38.2Z" fill="#fff"/></g></svg>
<div class="t" style="left:2426.0px;top:409.5px;font-size:45px;color:#2f3133;letter-spacing:-1.70px;">Homepage Redesign Brief</div>
<div class="a" style="left:2079px;top:552px;width:232px;height:81px;background:#f3f3f3;border-radius:22px"></div>
<div class="t" style="left:2105.4px;top:570.7px;font-size:43.5px;color:#2f3133;letter-spacing:-0.77px;">Overview</div>
<div class="t" style="left:2355.1px;top:570.7px;font-size:43.5px;color:#7a7a7c;letter-spacing:-1.39px;">Messages</div>
<div class="t" style="left:2618.0px;top:570.7px;font-size:43.5px;color:#7a7a7c;letter-spacing:-0.90px;">Attachments</div>
<svg class="a" style="left:2924px;top:575px;" width="34" height="34" viewBox="0 0 34 34"><path d="M17 3.5V31.5M3 17.5H31" stroke="#8e8f93" stroke-width="3.6" stroke-linecap="round"/></svg>
<div class="t" style="left:2969.2px;top:570.2px;font-size:43.5px;color:#7a7a7c;letter-spacing:-2.95px;">New</div>
<svg class="a" style="left:2359.5px;top:736px;" width="69" height="69" viewBox="0 0 69 69"><g transform="scale(1.2545)"><rect width="55" height="55" rx="12.5" fill="#7f63d5"/><path d="M13 17A14.3 5.6 0 0 1 41.6 17V25.4A14.3 4.6 0 0 1 13 25.4Z" fill="#fff"/><ellipse cx="27.3" cy="17.6" rx="11.2" ry="3" fill="#7f63d5"/><path d="M13 29.2A14.3 3.8 0 0 0 41.6 29.2V38.2A14.3 4.8 0 0 1 13 38.2Z" fill="#fff"/></g></svg>
<div class="t" style="left:2449.9px;top:734.5px;font-size:71px;color:#2f3133;letter-spacing:-0.90px;">Homepage Redesign Brief</div>
<div class="t" style="left:2361.0px;top:837.7px;font-size:46.5px;color:#7b7b7b;letter-spacing:-0.39px;">Documentation for Authentication’s Access token and ID Tokens.</div>
<div class="a" style="left:2360px;top:966px;width:1700px;height:3px;background:#ececec"></div>
<div class="a" style="left:2360px;top:1052px;width:1700px;height:2000px;background:#f8f8f8;border-top-left-radius:52px"></div>
<svg class="a" style="left:2404px;top:1096px;" width="55" height="55" viewBox="0 0 55 55"><g transform="scale(1.0000)"><rect width="55" height="55" rx="12.5" fill="#7f63d5"/><path d="M13 17A14.3 5.6 0 0 1 41.6 17V25.4A14.3 4.6 0 0 1 13 25.4Z" fill="#fff"/><ellipse cx="27.3" cy="17.6" rx="11.2" ry="3" fill="#7f63d5"/><path d="M13 29.2A14.3 3.8 0 0 0 41.6 29.2V38.2A14.3 4.8 0 0 1 13 38.2Z" fill="#fff"/></g></svg>
<div class="t" style="left:2477.3px;top:1102.3px;font-size:42.5px;color:#2f3133;letter-spacing:-0.44px;-webkit-text-stroke:0.3px #2f3133;">Website</div>
<div class="a" style="left:2360px;top:1193px;width:1700px;height:1900px;background:#fff;border-left:3px solid #e6e6e6;border-top:3px solid #e6e6e6;border-top-left-radius:46px;box-sizing:border-box"></div>
<div class="t" style="left:2445.8px;top:1275.9px;font-size:71px;color:#4a4542;letter-spacing:-0.87px;">Homepage Redesign Brief</div>
<svg class="a" style="left:2442px;top:1384px;overflow:visible" width="66" height="66" viewBox="0 0 66 66"><defs><clipPath id="av3"><circle cx="50" cy="50" r="50"/></clipPath></defs><g transform="scale(0.6200)"><g clip-path="url(#av3)"><circle cx="50" cy="50" r="50" fill="#d9d9d9"/><path d="M6 100L10 84Q22 75 30 70Q31 59 40 58L50 86L60 58Q69 59 70 70Q78 75 90 84L94 100Z" fill="#2c2b27"/><path d="M41 62H59V76L50 85L41 76Z" fill="#c99575"/><ellipse cx="29" cy="47" rx="3.8" ry="6.5" fill="#c98f6a"/><ellipse cx="71" cy="47" rx="3.8" ry="6.5" fill="#c98f6a"/><path d="M32 32Q40 25 50 26Q60 25 68 32L68.5 50Q67 70 50 72Q33 70 31.5 50Z" fill="#deae8a"/><path d="M28.5 38Q26 11 50 11Q74 11 71.5 38L70 42Q69 31 61 27.5Q50 25 39 27.5Q31 31 30 42Z" fill="#1b1a18"/><path d="M37 42H45M55 42H63" stroke="#4a3428" stroke-width="2.2"/><path d="M45 60.5H55" stroke="#b57a66" stroke-width="2.2"/></g><circle cx="83" cy="83" r="15.5" fill="#fff"/><circle cx="83" cy="83" r="10.9" fill="#00a57a"/></g></svg>
<div class="t" style="left:2516.3px;top:1392.9px;font-size:43px;color:#3f3a38;letter-spacing:0.22px;-webkit-text-stroke:0.5px #3f3a38;">Jack Smith</div>
<div class="a" style="left:2745.2px;top:1415px;width:4.8px;height:4.8px;background:#7b7b7b"></div>
<div class="t" style="left:2767.7px;top:1393.7px;font-size:42px;color:#7b7b7b;letter-spacing:-0.22px;">Yesterday</div>
<svg class="a" style="left:2446px;top:1550px;" width="47" height="52" viewBox="0 0 47 52"><g fill="#8e8f93"><rect x="0" y="4.5" width="46" height="46.5" rx="9"/></g><rect x="4.6" y="9.5" width="36.8" height="9" fill="#fff"/><g fill="#8e8f93"><rect x="10" y="0" width="4.6" height="13" rx="2.3"/><rect x="28.5" y="0" width="4.6" height="13" rx="2.3"/></g></svg>
<div class="t" style="left:2511.0px;top:1550.8px;font-size:51px;color:#77777a;letter-spacing:-1.44px;">Date Created:</div>
<div class="t" style="left:2965.5px;top:1550.7px;font-size:50px;color:#4a4542;letter-spacing:0.02px;-webkit-text-stroke:0.2px #4a4542;">Mon 5 May  05:00PM</div>
<svg class="a" style="left:2446px;top:1665px;" width="46" height="48" viewBox="0 0 46 48"><circle cx="23" cy="11.5" r="11" fill="#8e8f93"/><path d="M1 39Q1 27 14 27H32Q45 27 45 39V42Q45 47 40 47H6Q1 47 1 42Z" fill="#8e8f93"/></svg>
<div class="t" style="left:2515.1px;top:1662.8px;font-size:51px;color:#77777a;letter-spacing:-1.51px;">Assign:</div>
<svg class="a" style="left:2965.5px;top:1655px;overflow:visible" width="72" height="72" viewBox="0 0 72 72"><defs><clipPath id="av4"><circle cx="50" cy="50" r="50"/></clipPath></defs><g transform="scale(0.6800)"><g clip-path="url(#av4)"><circle cx="50" cy="50" r="50" fill="#d9d9d9"/><path d="M6 100L10 84Q22 75 30 70Q31 59 40 58L50 86L60 58Q69 59 70 70Q78 75 90 84L94 100Z" fill="#2c2b27"/><path d="M41 62H59V76L50 85L41 76Z" fill="#c99575"/><ellipse cx="29" cy="47" rx="3.8" ry="6.5" fill="#c98f6a"/><ellipse cx="71" cy="47" rx="3.8" ry="6.5" fill="#c98f6a"/><path d="M32 32Q40 25 50 26Q60 25 68 32L68.5 50Q67 70 50 72Q33 70 31.5 50Z" fill="#deae8a"/><path d="M28.5 38Q26 11 50 11Q74 11 71.5 38L70 42Q69 31 61 27.5Q50 25 39 27.5Q31 31 30 42Z" fill="#1b1a18"/><path d="M37 42H45M55 42H63" stroke="#4a3428" stroke-width="2.2"/><path d="M45 60.5H55" stroke="#b57a66" stroke-width="2.2"/></g><circle cx="90" cy="90" r="15.5" fill="#fff"/><circle cx="90" cy="90" r="10.9" fill="#00a57a"/></g></svg>
<div class="t" style="left:3054.2px;top:1663.4px;font-size:50px;color:#4a4542;letter-spacing:0.51px;-webkit-text-stroke:0.2px #4a4542;">Jack Smith</div>
<svg class="a" style="left:2443px;top:1791px;" width="53" height="46" viewBox="0 0 53 46"><path d="M22 3.5Q26.5 -2 31 3.5L52 40Q54 45.5 48 45.5H5Q-1 45.5 1 40Z" fill="#8e8f93"/></svg>
<div class="t" style="left:2514.5px;top:1789.0px;font-size:51px;color:#77777a;letter-spacing:-0.68px;">Status:</div>
<div class="a" style="left:2965.5px;top:1779px;width:203px;height:73px;background:#f3f3f3;border-radius:14px"></div>
<div class="t" style="left:2987.0px;top:1793.9px;font-size:43px;color:#2f3133;letter-spacing:-0.72px;">on going</div>
<svg class="a" style="left:2446px;top:1917px;" width="46" height="50" viewBox="0 0 46 50"><rect x="1" y="2" width="4.6" height="47" rx="2.3" fill="#8e8f93"/><path d="M4 4Q12 0 23 4Q34 8 45 4V30Q34 34 23 30Q12 26 4 30Z" fill="#8e8f93"/></svg>
<div class="t" style="left:2513.3px;top:1915.4px;font-size:51px;color:#77777a;letter-spacing:-0.73px;">Priority:</div>
<div class="a" style="left:2965.5px;top:1908.5px;width:128px;height:68px;background:#f7e0e1;border:3px solid #f2caca;border-radius:14px;box-sizing:border-box"></div>
<div class="t" style="left:2986.2px;top:1920.6px;font-size:43px;color:#d44848;letter-spacing:-0.87px;">High</div>
<svg class="a" style="left:2446px;top:2029px;" width="47" height="52" viewBox="0 0 47 52"><g fill="#8e8f93"><rect x="0" y="4.5" width="46" height="46.5" rx="9"/></g><rect x="4.6" y="9.5" width="36.8" height="9" fill="#fff"/><g fill="#8e8f93"><rect x="10" y="0" width="4.6" height="13" rx="2.3"/><rect x="28.5" y="0" width="4.6" height="13" rx="2.3"/></g><path d="M15 33L21 39L31 28" fill="none" stroke="#fff" stroke-width="4.2" stroke-linecap="round" stroke-linejoin="round"/></svg>
<div class="t" style="left:2513.6px;top:2029.0px;font-size:51px;color:#77777a;letter-spacing:-2.13px;">Due Date:</div>
<div class="t" style="left:2966.6px;top:2029.9px;font-size:50px;color:#4a4542;letter-spacing:-0.65px;-webkit-text-stroke:0.2px #4a4542;">Sat 17 May  05:00PM</div>
<div class="a" style="left:2363px;top:2185px;width:1700px;height:3px;background:#ececec"></div>
<div class="t" style="left:2446.0px;top:2297.9px;font-size:56px;color:#4a4542;letter-spacing:0.62px;-webkit-text-stroke:0.3px #4a4542;">Description</div>
<div class="t" style="left:2446.6px;top:2409.0px;font-size:49.5px;color:#767676;letter-spacing:-0.10px;">We’re updating the homepage to align with our evolving product vision and user</div>
<div class="t" style="left:2445.5px;top:2476.0px;font-size:49.5px;color:#767676;letter-spacing:-0.24px;">experiences. Our aim is to design a more streamlined layout that effectively communicates our value</div>
<div class="t" style="left:2445.0px;top:2542.9px;font-size:49.5px;color:#767676;letter-spacing:-0.15px;">proposition, showcases essential features, and drives sign-ups.</div>
<div class="t" style="left:2446.5px;top:2651.6px;font-size:49.5px;color:#767676;letter-spacing:-0.10px;">The revamped design will focus on quicker load times, improved mobile responsiveness, and a</div>
<div class="t" style="left:2446.5px;top:2718.6px;font-size:49.5px;color:#767676;letter-spacing:-0.30px;">seamless onboarding process for new users. We’re drawing on insights from user research to improve</div>
<div class="t" style="left:2445.5px;top:2785.5px;font-size:49.5px;color:#767676;letter-spacing:0.06px;">clarity, trust indicators, and navigation.</div>
<div class="a" style="left:2363px;top:2950px;width:1700px;height:3px;background:#ececec"></div>
</body></html>
